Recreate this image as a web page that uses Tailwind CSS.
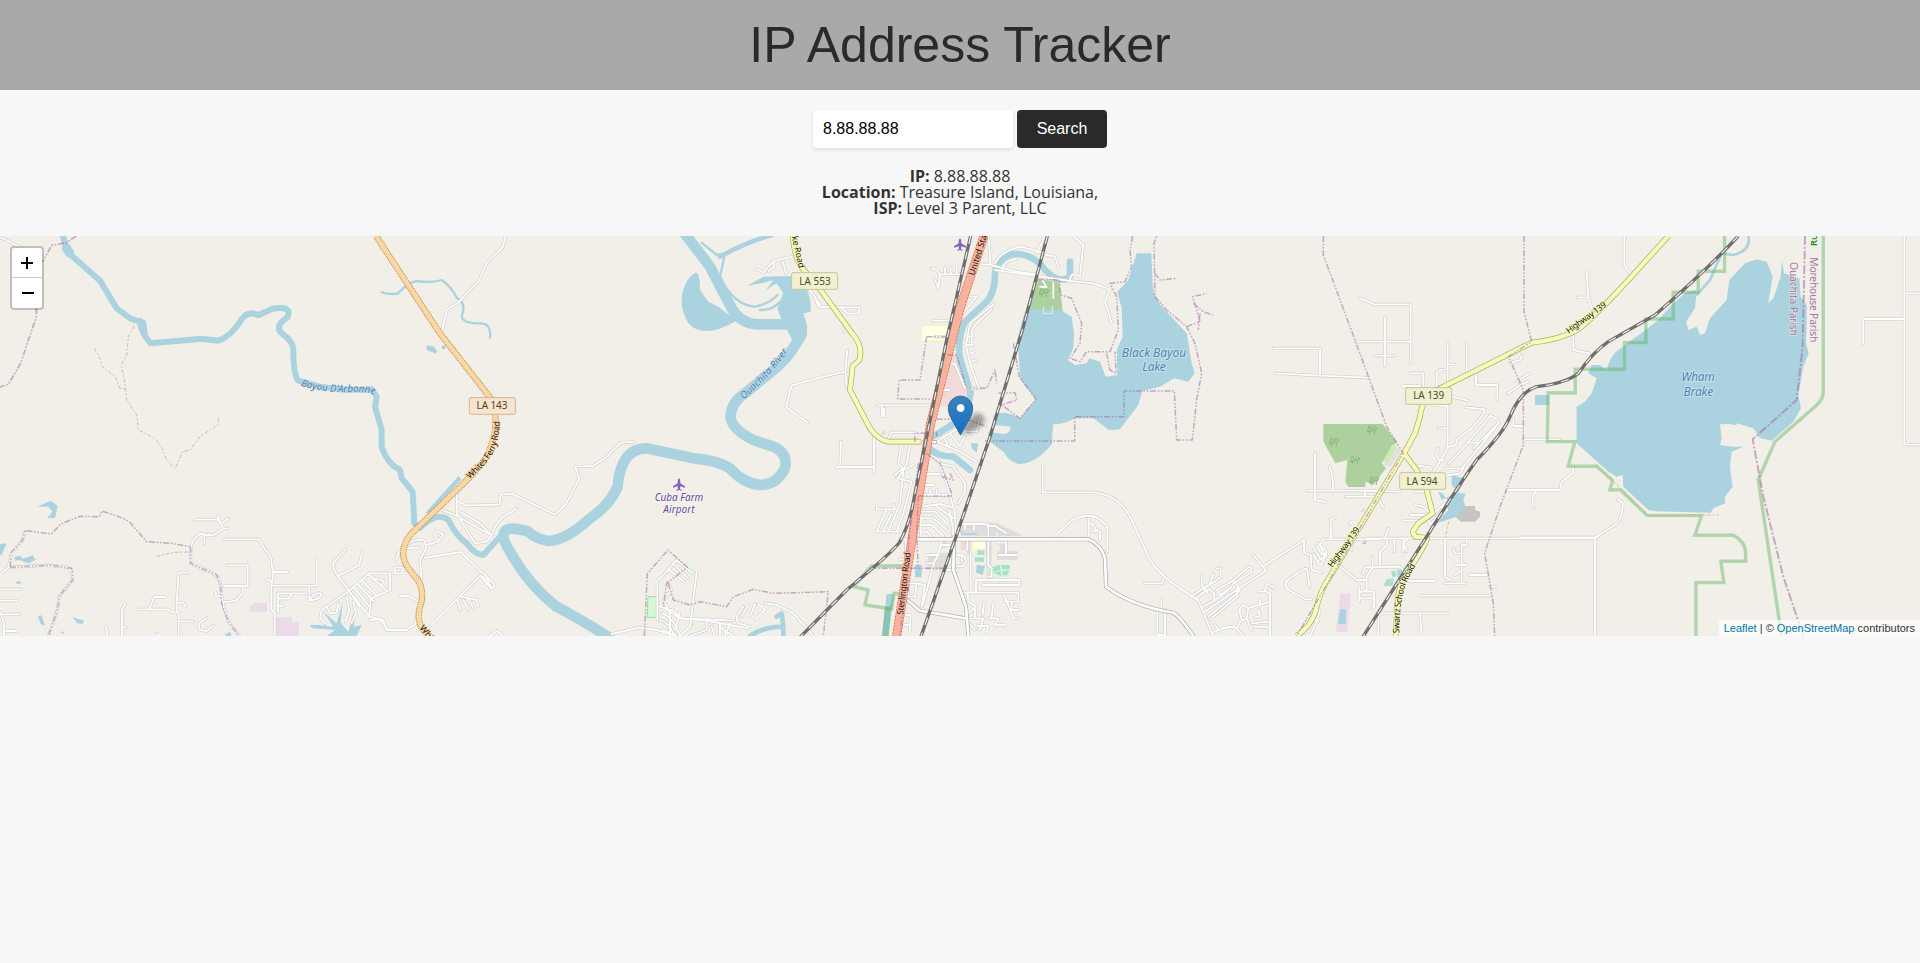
<!DOCTYPE html>
<html lang="en">
<head>
<meta charset="utf-8">
<title>IP Address Tracker</title>
<script src="https://cdn.jsdelivr.net/npm/@tailwindcss/browser@4"></script>
</head>
<body class="min-h-screen bg-[#f7f7f7] text-[#2a2a2a] font-['Open_Sans',sans-serif]">
<header class="flex h-[90px] items-center justify-center bg-[#a9a9a9]">
  <h1 class="font-['Liberation_Sans',Arial,sans-serif] text-[50px] leading-[90px] font-normal">IP Address Tracker</h1>
</header>
<main>
  <form class="flex justify-center gap-1 pt-5 font-['Liberation_Sans',Arial,sans-serif]">
    <input class="h-[38px] w-[200px] rounded bg-white px-2.5 text-base text-black shadow-[0_2px_4px_rgba(0,0,0,0.1)] outline-none" value="8.88.88.88">
    <button type="button" class="h-[38px] w-[90px] rounded bg-[#2a2a2a] text-base text-white">Search</button>
  </form>
  <div class="flex h-[88px] flex-col items-center pt-5 text-base leading-4 font-normal text-[#333]">
    <p><strong class="font-bold">IP:</strong> 8.88.88.88</p>
    <p><strong class="font-bold">Location:</strong> Treasure Island, Louisiana,</p>
    <p><strong class="font-bold">ISP:</strong> Level 3 Parent, LLC</p>
  </div>
  <section class="relative h-[400px] w-full overflow-hidden bg-[#f2efe9]">
<svg class="block h-[400px] w-[1920px]" viewBox="0 18 5760 1200" fill="none" stroke-linecap="round" stroke-linejoin="round" font-family="'Noto Sans',sans-serif">
<defs>
<!-- residential streets -->
<g id="minor">
  <g>
    <path d="M0 22L20 30L60 52M585 869H652L662 882L684 866M652 858L670 896L640 916L600 912Q575 925 572 960V1000L640 1030Q662 1045 662 1070L668 1120L685 1175L718 1218M670 896L682 895M613 912V940M670 928H776L800 965Q816 980 815 1005L820 1030L814 1070V1140L824 1145V1218M820 1026H862M798 1050Q810 1044 815 1060M820 1067H950V984M928 1067V1110Q965 1110 963 1090Q945 1086 932 1105M834 1145V1090H920M834 1106H865L875 1092M834 1128H848M684 1006H743V1068H672M728 1070V1090L708 1112L668 1117M662 1098L648 1100V1086M564 1028H536L530 1118V1138L536 1150V1218M530 1118H550L557 1130M417 1138H500L520 1147H530M448 1138L462 1101H496M536 1174H580M376 1122L366 1138V1218M366 1192H378M620 1164L598 1180V1200L620 1203L640 1186M318 1190L323 1218M470 1210L478 1218M0 1078H60M0 1112H52M0 1153H58M0 1145L12 1180V1218M12 1203H50M0 1035L25 1012L35 970L68 930L75 905M25 1012L140 1006L205 1012Q218 1018 218 1050L178 1098L172 1140L145 1218"/>
    <path d="M1038 957L1000 998Q998 1015 1012 1036L1050 1086L1108 1160M1018 1036L1078 1005L1087 963M1108 1030H1170V1080L1112 1106L1108 1160L1150 1170L1160 1200M1108 1030L1048 1082L965 1140L960 1165L975 1180M1048 1082L1078 1130M1060 1070L1108 1130M1072 1060L1122 1115M1084 1050L1132 1100M1108 1035L1160 1082M1120 1045L1150 1052L1145 1068M980 1130L990 1150L1010 1148L1015 1120M1040 1100L1048 1140L1036 1175M1060 1115L1068 1150L1054 1180"/>
  </g>
  <g transform="translate(960)">
    <path d="M557 18L548 52L500 98L478 150L418 215L380 240L366 305M942 635L902 638L855 685L818 708L765 710L778 745L738 822L705 854L575 791L543 794L538 824L440 826L414 815M410 780V850L465 940L500 935L515 916L405 855L365 840M590 836L550 860L528 885L515 916M425 848L480 880L515 916M262 940Q290 925 314 932L318 955L300 990L308 1090L285 1185M314 984L422 966L520 1060Q530 1075 512 1074L482 1036L320 1200M318 945L355 935L370 912L350 904Q335 915 355 930M228 992L235 968L258 955L298 953M245 1012H225V1030H248V1012M240 1098H265L295 1114M490 1040L500 1062M500 1046L512 1068M412 1110L422 1140M425 1100L470 1110L475 1130M430 1110L445 1138M445 1105L460 1135M150 1170L180 1168L205 1200H260L290 1180M510 1218L530 1202L548 1218M1028 1038L1070 990L1118 1030M1058 1000L1105 1045M1045 1018L1092 1055M1028 1038L1012 1050V1170M875 1212L960 1192L1010 1200L1060 1215M1018 1130L1060 1142L1085 1165L1240 1172M1130 1025L1110 1190L1080 1218M1025 1150Q1060 1160 1080 1218M1045 1060L1055 1080L1030 1110L1048 1145M1020 1170Q1050 1180 1060 1210"/>
  </g>
  <g transform="translate(1920)">
    <path d="M350 117L370 128L400 94L456 80M385 124L402 112L400 94M428 94L438 130M505 175L525 200L535 230L600 232H657V250H622L605 232M525 205L548 234M622 361L616 425L620 470M616 425L540 443L455 466L438 530L503 578M612 305L618 296M713 526H870M726 526V558H732V535M603 634L600 710M588 711H702M702 610V728M745 625L755 607H825L830 630M785 640L775 700L788 715L765 735M810 645L800 700L775 745M820 705L790 720L780 820L745 905M770 745L815 755L790 850L770 905M710 825V838H765L760 823M740 838L710 905H780M755 850L730 905M875 115L890 120L900 133H980M900 133L895 175L885 150M915 133V113M932 133V113M950 133V113M878 272H930M885 320H930M1045 18L1052 105L1130 125L1200 135M1008 103H1052M1065 100Q1080 65 1140 50L1200 65M1085 120Q1095 90 1130 86M960 198L1010 200L968 250M1062 222L990 280L978 345L990 400L1015 470M1055 238L1012 278L995 300L995 345M985 320L1000 318M982 345L998 345M990 370L1003 366M993 395L1008 390M918 398L945 402L975 475H1020M905 480H928M860 636L890 635L945 600L1010 605L1020 560M890 635L960 665L1010 695M910 618L925 650M930 610L960 650L980 600M950 590L990 620M860 668L895 690L920 760L945 850L948 918M895 700L940 710L975 760V785L955 820M850 732H900M848 765H882M835 795H920M870 780V795M890 780V795M60 1125L120 1165L200 1172L270 1185L325 1195M200 1165V1200L150 1218M90 1140V1218M120 1145L105 1200M240 1180V1218M270 1180L255 1218M310 1130Q280 1160 295 1180L330 1190M325 1125L305 1160M345 1122L330 1160M355 1122L375 1140L345 1170M375 1120L410 1125L460 1150L520 1218M245 1195L280 1218M215 1190L225 1218M70 1200L110 1218"/>
  </g>
  <g transform="translate(2580 810)">
    <path d="M118 118H166M138 118V178H118M182 118V20L240 12L275 22M182 35H225L265 75M182 55H220L268 95M182 75H215L250 108M182 95H200L215 112M228 18L280 55M298 72H375L385 78H405L440 100M315 72V88M342 72V90M385 72V195L395 205V230H385M412 100V128H438V165H470M438 118V165M415 165H438M322 120V150M332 160V275M348 275V240H478V255H368M302 278H475V305H435M322 278L325 305L348 318L325 340M345 318V350M372 308L368 345M400 308L395 350M432 285L445 315L460 355H475M455 305V330H475M330 355H370L360 390M330 372L345 390M352 378H385L380 398M385 355H415L405 375H435M245 120L235 165H200M240 135H270M235 165L220 190H200M268 30L280 90L270 190M250 210H290M290 165Q315 160 318 185Q310 205 290 198M305 165V190M225 180L190 310M245 215L218 320M145 240V290H165L170 250L195 255L185 320M145 250H165M150 290H140M130 345H152L148 408M135 375H150"/>
  </g>
  <g transform="translate(2640)">
    <path d="M580 18L610 45L600 140M478 65L500 75L525 80L535 110M470 70L485 40L495 18M345 120L565 152L640 160L690 178L675 215L695 278M600 140Q570 120 570 155M488 705V787H640Q720 795 755 870L810 990Q840 1040 935 1098L955 1110M525 918L570 875Q610 850 650 862Q690 885 682 915V965M626 865V920M626 880Q640 878 648 900L660 905V930M640 905L652 900M793 1060H845L852 1044M844 1110V1140M832 1140V1215H855V1140"/>
  </g>
  <g transform="translate(3540 900)">
    <path d="M0 175L55 212L100 318M32 200L110 150L122 140V115H110M65 135V165L82 188M100 132L88 165M48 208L65 190L88 178L102 190V212L68 232M102 212L145 180L165 155M110 180L155 155L205 112Q220 110 212 128L168 155M165 155L175 172M110 180L120 195L155 172M75 245L170 180L258 122L220 75M180 180L165 195L85 260M172 175V200L90 268M258 122L248 110L372 30V68L392 75L395 120L425 128M380 115Q368 115 318 155Q315 170 325 180L378 208H395M382 118L388 170M428 28L420 45L440 65L425 105L412 98M428 28H600M452 0V25M410 48L425 72L440 80M402 58L420 85M400 72L412 95L440 75M415 40L432 70M455 90L530 150H560M548 130L555 112H600M578 82V112L560 140V180L540 188M538 170V215M538 185H582V230L575 235M538 205H580M515 35V60M270 170Q285 165 280 175M255 185Q255 160 272 162M258 185L270 190V318M258 185H235M270 215L205 235L188 225L178 240L185 270L172 290M240 210V225M205 235L200 265L215 300M200 265L180 275M225 262L240 258L235 240M215 280L265 275M225 290L270 292M105 285L115 300L95 310M115 300Q150 285 170 295L190 318M420 240L410 275L390 318M395 265L415 275M370 300L385 318"/>
  </g>
  <g transform="translate(3600)">
    <path d="M480 205L523 223H632V398M555 262V407M468 335H632M525 377H584M220 355H360V435M225 430L360 437L505 443M630 430H670V470M608 468H660M743 340V470M743 403H763M800 340V425M710 470V430Q712 418 740 418M828 435V465H892V510M743 525V650L735 670L700 725M715 595H743M700 525L743 528M755 500L805 512M798 532L855 538L850 552L820 590L770 630L768 645L740 652M820 655L895 580Q900 570 870 556L862 570L780 665L745 700M735 715H785L840 650L895 580M805 638H838M715 655L708 670L715 690H730M640 705L690 712L695 720M735 738L780 730L790 715M940 565V588H968M970 628H1078M1120 710L1118 730L1085 755L1080 780H920M1042 780H1012Q990 800 1002 832M1120 310V360L1168 370M1160 125L1165 200L1175 235M1132 202H1165M925 490L960 465L985 455M950 455L988 430M930 400L960 390L966 375M345 670L345 810L375 816M388 710Q402 740 398 780M322 782H480L600 785M437 800H530L550 830M495 782V800M640 785H690M645 825L670 830L690 850M630 855H675L690 880M610 872H670M675 875L735 820L720 850L690 885M500 925H1185L1200 915M392 925V870L405 862M450 885Q460 860 470 890M565 895L555 925M563 925L560 945L540 965V1005M583 925V965M610 925V965M625 925L610 940L620 965M735 925V1040L752 1050M800 925V945H785V1060H735M760 955L765 970H785M735 1060H795M765 1005H798M765 1035L785 1020M808 1035H862M660 1097H872M870 1070H888M535 1218V1160L545 1150H742M660 1150L665 1218M625 1053H705M495 1012L600 1010L610 1020"/>
  </g>
  <g transform="translate(4560)">
    <path d="M313 18V105L330 130M0 922H225V1218M225 922L295 878Q310 850 308 818L293 808M1153 18V640Q1153 644 1165 644H1200M1153 190H1200M1153 267H1030V340"/>
  </g>
</g>
<g id="tertiary">
  <path transform="translate(2640)" d="M100 928H625Q665 945 675 985L678 1070Q760 1130 880 1148Q900 1160 940 1218M222 920L220 1020L258 1130L265 1218M85 1112L120 1142L255 1165M130 636H165"/>
</g>
<g id="yellow">
  <path d="M2378 18Q2385 90 2410 118L2458 175L2560 315Q2590 350 2578 390L2558 408L2550 480L2610 595Q2635 630 2665 635H2762"/>
  <path d="M5005 18L4935 95Q4810 235 4745 290Q4700 325 4595 338L4330 470Q4265 500 4260 560L4245 610L4212 670L3990 1040Q3960 1080 3945 1150Q3930 1190 3890 1218M4212 670L4250 720L4280 780L4298 850L4255 880L4238 905L4245 920L4282 924Q4275 945 4240 1000Q4195 1060 4193 1110L4187 1218"/>
</g>
<path id="orange" d="M1128 18L1320 310L1480 515Q1500 600 1460 680Q1430 725 1370 780L1235 910Q1190 965 1225 1015L1255 1052Q1275 1090 1260 1130Q1245 1190 1290 1218"/>
<path id="red" d="M2952 18L2880 235L2792 580L2750 840L2688 1230"/>
<g id="rail">
  <path d="M2912 18L2840 330L2745 790Q2730 880 2700 935Q2680 965 2540 1080L2400 1222"/>
  <path d="M3142 18L3070 290L2970 620L2868 920L2762 1222"/>
  <path d="M5215 18Q5110 130 4965 255L4825 335Q4780 365 4735 430Q4700 460 4610 470Q4560 485 4530 560Q4510 610 4430 690Q4380 760 4280 920L4088 1222"/>
</g>
<path id="wf" d="M1408 747Q1482 687 1492 632T1497 560"/>
<path id="bayou" d="M902 467Q970 488 1040 486T1128 495"/>
<path id="ouachita" d="M2230 510Q2320 430 2370 355"/>
<path id="swartz" d="M4198 1210Q4198 1120 4215 1070Q4225 1040 4250 1002"/>
<path id="plane" d="M0-18Q4-16 4-8V-3L18 6V10L4 6L3 13L8 17V19L0 17L-8 19V17L-3 13L-4 6L-18 10V6L-4-3V-8Q-4-16 0-18Z"/>
<g id="trees" fill="none" stroke="#7fae74" stroke-width="2.5"><path d="M-8-12L-14 4H-2ZM-8 4V12M7 0V12"/><circle cx="7" cy="-5" r="6"/></g>
<linearGradient id="pin" x1="0" y1="0" x2="0" y2="1"><stop stop-color="#3a83bd"/><stop offset="1" stop-color="#126fc6"/></linearGradient>
<filter id="soft" x="-50%" y="-50%" width="200%" height="200%"><feGaussianBlur stdDeviation="8"/></filter>
</defs>

<!-- land use -->
<path fill="#ebdbe8" d="M750 1130L765 1119H801V1145H750ZM827 1161H875V1176H897V1218H827ZM4021 1090H4053L4042 1206H4008ZM4080 845L4088 835H4098L4090 850ZM2642 608L2650 600L2660 610L2650 618Z"/>
<path fill="#f0dada" d="M2842 375H2870L2900 480V530H2802ZM2882 932H2898V960H2882Z"/>
<path fill="#ffffe5" stroke="#f8f5b0" stroke-width="3" d="M2768 287H2843L2835 332H2763ZM2919 934H2958V958H2919Z"/>
<path fill="#add19e" d="M3105 148L3178 155L3188 245L3078 240ZM3970 582H4148L4190 635L4145 700L4158 715L4120 765L4098 755L4095 771H4045L4036 755L4042 690L4006 700L3970 635Z"/>
<path fill="#dfdedc" d="M2875 880L2990 878L3070 918H2885ZM3000 935H3020V962H3053V990H2992V962H3000ZM2785 970H2845V1020H2780ZM2902 932H2912V975H2902ZM2955 925H2975V1040H2960ZM2820 932H2838V955H2820Z"/>
<path fill="#e2e0dd" d="M4180 650L4205 660L4170 710L4150 705Z"/>
<path fill="#c8c6c4" d="M4085 942L4098 928V942Z"/>
<path fill="#c8facc" d="M1945 1100H1970V1162H1943ZM2065 1020L2075 1008L2086 1030L2070 1038ZM2070 1175H2085V1187H2070ZM2960 1005H3030V1040H2965Z" opacity=".65"/>
<path stroke="#8fe5a0" stroke-width="3" d="M1945 1100H1970V1162H1943Z"/>
<path fill="#aae0cb" d="M2932 961H2953V975H2932ZM2924 982H2952V995H2924ZM2980 1010L3000 1005V1020L2980 1025ZM3005 1005H3030V1018H3005ZM2980 1028L3003 1022V1038ZM3008 1022H3028L3020 1036H3008ZM4172 1025L4185 1022L4190 1038L4178 1042ZM4190 1020L4208 1018L4205 1048L4192 1042ZM4160 1048L4182 1045L4178 1068H4150ZM4185 1055L4205 1052L4198 1070H4188Z"/>
<path fill="#c6c3c4" d="M4360 855L4382 828H4425V840L4440 845V860L4425 875H4382Z"/>
<path fill="#cdebb0" d="M4177 642L4190 650L4162 700L4150 692Z"/>

<!-- water -->
<g fill="#aad3df">
  <path d="M112 830L152 812L173 828L165 865L142 864L157 845L145 830ZM0 942L20 940L5 975H0ZM44 980L60 978L70 986L98 976L107 990L85 1000L58 990L45 992ZM47 1056L60 1053L63 1061H50ZM114 1160L125 1155L135 1188L122 1182ZM217 1161L252 1172L248 1182L232 1180ZM180 1205H193L188 1212ZM677 1211L690 1206L695 1218H677ZM930 1185L960 1185L1000 1190L970 1145L1010 1180L1028 1116L1022 1178L1045 1205L1066 1130L1062 1190L1085 1185L1070 1218H980L1005 1200L935 1195Z"/>
  <path d="M1280 345L1300 349L1311 362L1308 371L1280 360ZM1324 348L1335 346L1338 356L1327 358ZM1375 739L1385 748L1290 848L1275 850Z"/>
  <path d="M2086 128Q2100 125 2100 180L2125 215L2155 230L2210 272Q2110 330 2065 280Q2030 220 2055 165Q2065 140 2086 128ZM2290 140L2375 138Q2435 160 2432 245L2410 250L2422 290L2420 320L2380 335L2345 270L2332 235L2350 190L2330 160L2298 180L2320 150L2285 160L2240 168Z"/>
  <path d="M2855 312H2838V328H2855ZM2913 640H2935L2930 668L2915 655ZM2745 1005H2765V1042H2745ZM2930 1005L2955 1008L2948 1035L2928 1028ZM2660 1092L2682 1092L2665 1218H2646Z"/>
  <path d="M3410 70H3454L3458 165Q3460 205 3500 245L3560 310L3575 400L3584 430L3565 455L3522 445L3480 470L3428 482L3415 525L3360 598L3328 601L3280 565H3225Q3190 585 3160 582Q3155 630 3157 640Q3110 700 3060 702Q3030 700 3010 665L2966 632V605L3010 612Q3030 612 3032 590L2985 585L2980 558Q3010 535 3060 565L3108 508L3062 450L3052 330L3070 260L3082 235L3185 242L3215 260L3222 310L3220 355L3203 390L3225 405L3260 400L3268 385L3300 395L3317 440L3352 435L3350 360L3368 320L3365 235L3352 185L3385 150Z"/>
  <path d="M4355 735L4395 745L4375 790H4397L4390 810L4395 825L4370 860L4310 880L4300 898L4325 860L4345 840L4340 820L4360 810L4355 795L4325 810L4315 785L4328 790L4345 815L4372 785L4355 765ZM4020 1138H4038V1182H4015ZM4605 495H4646V525H4605Z"/>
  <path d="M4730 630V530L4755 515L4775 490L4790 445L4765 430L4775 405H4800L4820 420Q4830 370 4870 350L4895 330L4930 305L4975 270L5020 220L5055 190L5090 180L5085 235L5058 275L5065 300L5090 290L5100 315L5115 310L5130 265L5180 210L5188 150L5235 100L5270 88L5300 95L5318 140L5305 220L5320 205L5342 140L5346 90L5352 130L5398 145L5402 200L5420 225L5420 290L5418 340L5426 370L5410 410L5395 495L5403 535L5380 575L5315 632L5280 624L5260 595L5210 580L5198 650L5230 650L5195 665L5190 710L5198 770L5175 800V820L5140 835L5132 848L4970 844L4945 840L4870 770L4868 735L4850 740L4825 725L4730 640Z"/>
</g>
<path fill="#f2efe9" d="M5160 583L5165 625L5160 645L5200 650L5235 625L5240 612L5225 590L5205 585L5190 582Z"/>
<g stroke="#aad3df">
  <path stroke-width="18" d="M188 18L205 68L300 152L350 235L392 266L430 278L435 318L452 340L605 326L655 332Q690 322 725 268Q745 240 775 256L815 237Q880 225 862 262Q820 290 848 312Q880 335 880 360Q880 435 895 452L960 470L1040 480L1115 478L1130 500L1125 530L1145 600V650Q1160 700 1200 720L1205 745L1238 785L1243 880L1260 893Q1290 865 1315 860Q1335 860 1345 870Q1370 920 1400 940Q1425 975 1450 975L1505 915"/>
  <path stroke-width="28" d="M200 55L208 68"/>
  <path stroke-width="22" d="M420 275L432 310"/>
  <path stroke-width="32" d="M2050 5L2130 110Q2160 170 2195 235Q2220 280 2270 283H2380Q2420 295 2395 330Q2360 390 2320 420L2235 490Q2190 520 2192 565Q2200 600 2260 630L2320 650Q2365 670 2355 715Q2330 765 2280 765Q2230 760 2190 715Q2150 690 2080 685L1940 655Q1890 655 1870 700Q1855 730 1853 770Q1830 825 1770 865Q1700 930 1645 933Q1605 925 1585 905Q1520 885 1512 908Q1505 925 1530 965Q1590 1070 1670 1130Q1780 1190 1830 1225"/>
  <path stroke-width="7" d="M1145 187Q1170 195 1195 190Q1220 160 1250 153Q1290 160 1325 150Q1350 165 1372 205Q1400 220 1385 260Q1390 280 1440 280Q1475 280 1470 323M2105 38L2150 75L2175 70L2160 140Q2200 225 2265 230Q2310 220 2332 195M2280 240Q2320 240 2340 215"/>
  <path stroke-width="14" d="M2160 80Q2230 40 2315 15"/>
  <path stroke-width="20" d="M3210 95V140Q3180 165 3135 120Q3100 70 3040 72Q2990 85 2985 130Q2985 190 2960 215L2895 275Q2870 330 2880 385L2912 490L2900 550Q2840 600 2795 620L2782 650Q2810 680 2860 680L2910 720"/>
  <path stroke-width="14" d="M2250 1218Q2290 1190 2350 1190L2345 1150L2330 1160M2350 1185V1218"/>
  <path stroke-width="8" d="M5245 18Q5255 60 5200 75L5165 70L5130 150L5090 195"/>
  <path stroke-width="4" d="M2875 885L2885 912H2930"/>
</g>
<path fill="#8bc4b5" d="M2668 1130L2675 1120L2666 1218H2646L2655 1130Z"/>
<use href="#trees" x="4116" y="600"/><use href="#trees" x="4002" y="636"/><use href="#trees" x="4065" y="690"/><use href="#trees" x="4122" y="752"/><use href="#trees" x="3132" y="188"/>
<path d="M4036 690L4150 660" stroke="#b7d6a9" stroke-width="2"/>
<path d="M3130 230V250H3157V230" stroke="#e4efe8" stroke-width="3"/>
<path d="M3128 152L3140 172L3120 170M3160 158V205" stroke="#fff" stroke-width="5"/>

<!-- streets: casing below, surface above -->
<use href="#minor" stroke="#cccbc9" stroke-width="9"/>
<use href="#minor" stroke="#fff" stroke-width="5.5"/>
<use href="#tertiary" stroke="#a9a9a9" stroke-width="12"/>
<use href="#tertiary" stroke="#fff" stroke-width="8"/>

<!-- protected area outlines -->
<g stroke="#5fb45f" stroke-linejoin="miter" stroke-linecap="butt">
  <path id="park" stroke-width="10" opacity=".33" d="M5174 18V124H5095V187H5020V267H4938V338H4874V418H4726V489H4645L4642 635H4725L4705 709H4790L4838 752L4830 780H4862L4942 857H5105L5085 916H5200Q5235 935 5237 965V994H5163L5172 1058H5088V1218M5470 18V490Q5470 510 5440 535L5325 635L5275 750L5345 1218M2730 1008H2615L2560 1070L2605 1080L2595 1125L2675 1137L2683 1090L2720 1095"/>
  <use href="#park" transform="translate(-1 -1)" opacity=".5"/>
</g>
<!-- tracks -->
<path stroke="#cbb07d" stroke-width="2.5" stroke-dasharray="11 6 5 6" stroke-linecap="butt" d="M403 288L385 320L380 375L364 405L375 460L380 510L410 555L415 600L465 625L487 655L500 690L525 716L548 665L570 660L600 620L655 583V558M283 355L300 385L305 408L345 440L360 475H375M470 979L520 967L568 966M4790 705L4945 855H5155M4346 875L4336 922"/>

<!-- roads -->
<g stroke-linecap="butt">
  <use href="#yellow" stroke="#a6ab5a" stroke-width="17"/><use href="#yellow" stroke="#f6fabb" stroke-width="13"/>
  <use href="#orange" stroke="#b98c34" stroke-width="19" stroke-dasharray="4 2"/><use href="#orange" stroke="#fcd6a4" stroke-width="14"/>
  <use href="#red" stroke="#de6247" stroke-width="27" stroke-dasharray="8 2"/><use href="#red" stroke="#f9b29c" stroke-width="23"/>
</g>

<!-- administrative boundaries -->
<g stroke="#a06c9e" stroke-opacity=".55" stroke-width="4.5" stroke-linecap="butt" stroke-dasharray="18 5 5 5 5 5">
  <path d="M228 18L200 38L155 46L128 95M109 235V262L80 345L62 400L25 463L0 471" stroke-width="5"/>
  <path d="M30 1012L32 970L68 930L75 902L155 912L182 882L240 859L298 860L306 843L370 865L390 877L440 935L515 940L570 950M30 1012L150 1006L215 1015L218 1050L178 1098L172 1140L145 1218M572 950V1000L650 1035L662 1065L665 1120L685 1175L718 1218"/>
  <path d="M1933 1218L1942 1030L2004 960L2062 1012L2000 1060L1990 1130M2005 1060L2020 1110L2070 1125L2100 1115L2180 1130L2200 1100L2260 1078L2320 1090L2485 1085L2470 1218"/>
  <path d="M2780 320H2845M2780 320L2760 450H2697L2693 507H2790M2842 375H2870L2900 475H2960L2985 420L2990 460M3040 340L3058 440L3108 508L3060 565L3005 525L3050 510L3045 488L2995 490M2810 568H2900L2960 590M2780 610H2745V635M2955 633H3224V560H3372V483H3523L3530 630H3577L3590 510L3605 430L3585 340L3560 290L3500 240L3465 200L3462 40L3470 18M3398 18L3390 60L3395 110L3375 155L3330 160L3350 200L3355 300L3330 365H3260L3240 395L3210 385L3240 340L3245 280L3215 205L3182 195L3178 150L3105 148M3320 370L3330 420L3348 430L3345 365M3465 130L3480 150L3530 145M3560 290L3600 275L3578 200L3620 190M3580 220L3610 245L3638 255M3600 250L3595 300"/>
  <path d="M2780 670L2820 700L2855 790M2755 798H2855M2755 798L2750 920L2755 1015M2835 1015H2620M2825 740L2860 750L2850 730M2810 620L2810 605M2755 700L2730 900L2700 1218"/>
  <path d="M3970 18V75L4065 330L4160 590L4210 670L3890 1218M4572 18V245L4595 335L4525 380L4570 480V645L4500 830L4454 970L4480 1120L4484 1218"/>
  <path d="M5415 18L5408 350L5390 510L5258 628L5290 800L5350 1040L5410 1218" stroke-width="6" stroke-dasharray="26 6 6 6"/>
</g>

<!-- railways -->
<g stroke-linecap="butt"><use href="#rail" stroke="#6f6e6d" stroke-width="10"/><use href="#rail" stroke="#f3f2f0" stroke-width="3.5" stroke-dasharray="24 24"/></g>

<!-- shields -->
<g stroke-width="3" font-size="30" text-anchor="middle">
  <rect x="1408" y="503" width="138" height="50" rx="5" fill="#f7e4d0" stroke="#d6b48f"/>
  <g fill="#f1f0d5" stroke="#c7c792">
    <rect x="2375" y="128" width="138" height="50" rx="5"/><rect x="4217" y="473" width="138" height="50" rx="5"/><rect x="4199" y="728" width="138" height="50" rx="5"/>
  </g>
  <text x="1476" y="538" fill="#5c4114" textLength="93">LA 143</text>
  <g fill="#46501c"><text x="2445" y="165" textLength="94">LA 553</text><text x="4286" y="508" textLength="93">LA 139</text><text x="4266" y="765" textLength="93">LA 594</text></g>
</g>

<!-- labels -->
<g paint-order="stroke" stroke-width="5">
  <g font-size="26" fill="#111">
    <text stroke="#fcd6a4"><textPath href="#wf" textLength="204">Whites Ferry Road</textPath></text>
    <text stroke="#fcd6a4" transform="translate(1258 1195) rotate(49)">Whites</text>
    <text stroke="#f6fabb" transform="translate(2375 20) rotate(77)">ke Road</text>
    <text stroke="#f9b29c" transform="translate(2922 138) rotate(-72)">United States</text>
    <text stroke="#f9b29c" transform="translate(2709 1155) rotate(-83)" textLength="188">Sterlington Road</text>
    <text stroke="#f6fabb" transform="translate(3997 1014) rotate(-54)" textLength="142">Highway 139</text>
    <text stroke="#f6fabb" transform="translate(4706 312) rotate(-36)" textLength="142">Highway 139</text>
    <text stroke="#f6fabb"><textPath href="#swartz" textLength="212">Swartz School Road</textPath></text>
  </g>
  <g font-style="italic" fill="#4d80b3" font-size="29" stroke="#c3dfe8" stroke-width="3">
    <text><textPath href="#bayou" textLength="224">Bayou D'Arbonne</textPath></text>
    <text><textPath href="#ouachita" startOffset="2" textLength="196">Ouachita River</textPath></text>
    <g font-size="36" stroke="#dcebf0" stroke-width="5" stroke-opacity=".8" text-anchor="middle">
      <text x="3462" y="380" textLength="193">Black Bayou</text><text x="3462" y="423" textLength="71">Lake</text>
      <text x="5094" y="454" textLength="101">Wham</text><text x="5095" y="498" textLength="89">Brake</text>
    </g>
  </g>
  <g font-style="italic" fill="#6846a5" stroke="#f7f5f0" font-size="30" text-anchor="middle"><text x="2037" y="814" textLength="146">Cuba Farm</text><text x="2037" y="850" textLength="94">Airport</text></g>
  <g fill="#a576a3" stroke="#f2efe9" stroke-opacity=".6" font-size="31"><text transform="translate(5369 96) rotate(90)" textLength="222">Ouachita Parish</text><text transform="translate(5430 82) rotate(90)" textLength="255">Morehouse Parish</text></g>
  <text transform="translate(5452 48) rotate(-90)" font-size="28" font-weight="600" fill="#208b20" stroke="#f2efe9">Russell</text>
</g>
<use href="#plane" fill="#8461c4" x="2037" y="763"/><use href="#plane" fill="#8461c4" x="2880" y="43"/>

<!-- location marker -->
<path d="M2884 615Q2895 570 2920 555T2955 570Q2945 600 2884 615Z" fill="#000" opacity=".35" filter="url(#soft)"/>
<path d="M2881 614L2854 566Q2845 551 2845 535A36 36 0 0 1 2918 535Q2918 551 2909 566Z" fill="url(#pin)" stroke="#2e6c97" stroke-width="3"/>
<circle cx="2882" cy="534" r="13" fill="#fff" stroke="#2e6c97" stroke-width="2"/>
</svg>
    <div class="absolute top-2.5 left-2.5 flex w-[34px] flex-col overflow-hidden rounded border-2 border-black/20 bg-white bg-clip-padding text-black">
      <button class="flex h-[30px] items-center justify-center border-b border-[#ccc]" aria-label="Zoom in"><svg class="size-3" viewBox="0 0 12 12"><path d="M0 6h12M6 0v12" stroke="currentColor" stroke-width="2"/></svg></button>
      <button class="flex h-[30px] items-center justify-center" aria-label="Zoom out"><svg class="ml-0.5 size-3" viewBox="0 0 12 12"><path d="M0 6h12" stroke="currentColor" stroke-width="2"/></svg></button>
    </div>
    <div class="absolute right-0 bottom-0 h-4 bg-white/70 px-[5px] font-['Liberation_Sans',Arial,sans-serif] text-[11px] leading-4 text-[#333]"><a class="text-[#0078a8]">Leaflet</a> | © <a class="text-[#0078a8]">OpenStreetMap</a> contributors</div>
  </section>
</main>
</body>
</html>
